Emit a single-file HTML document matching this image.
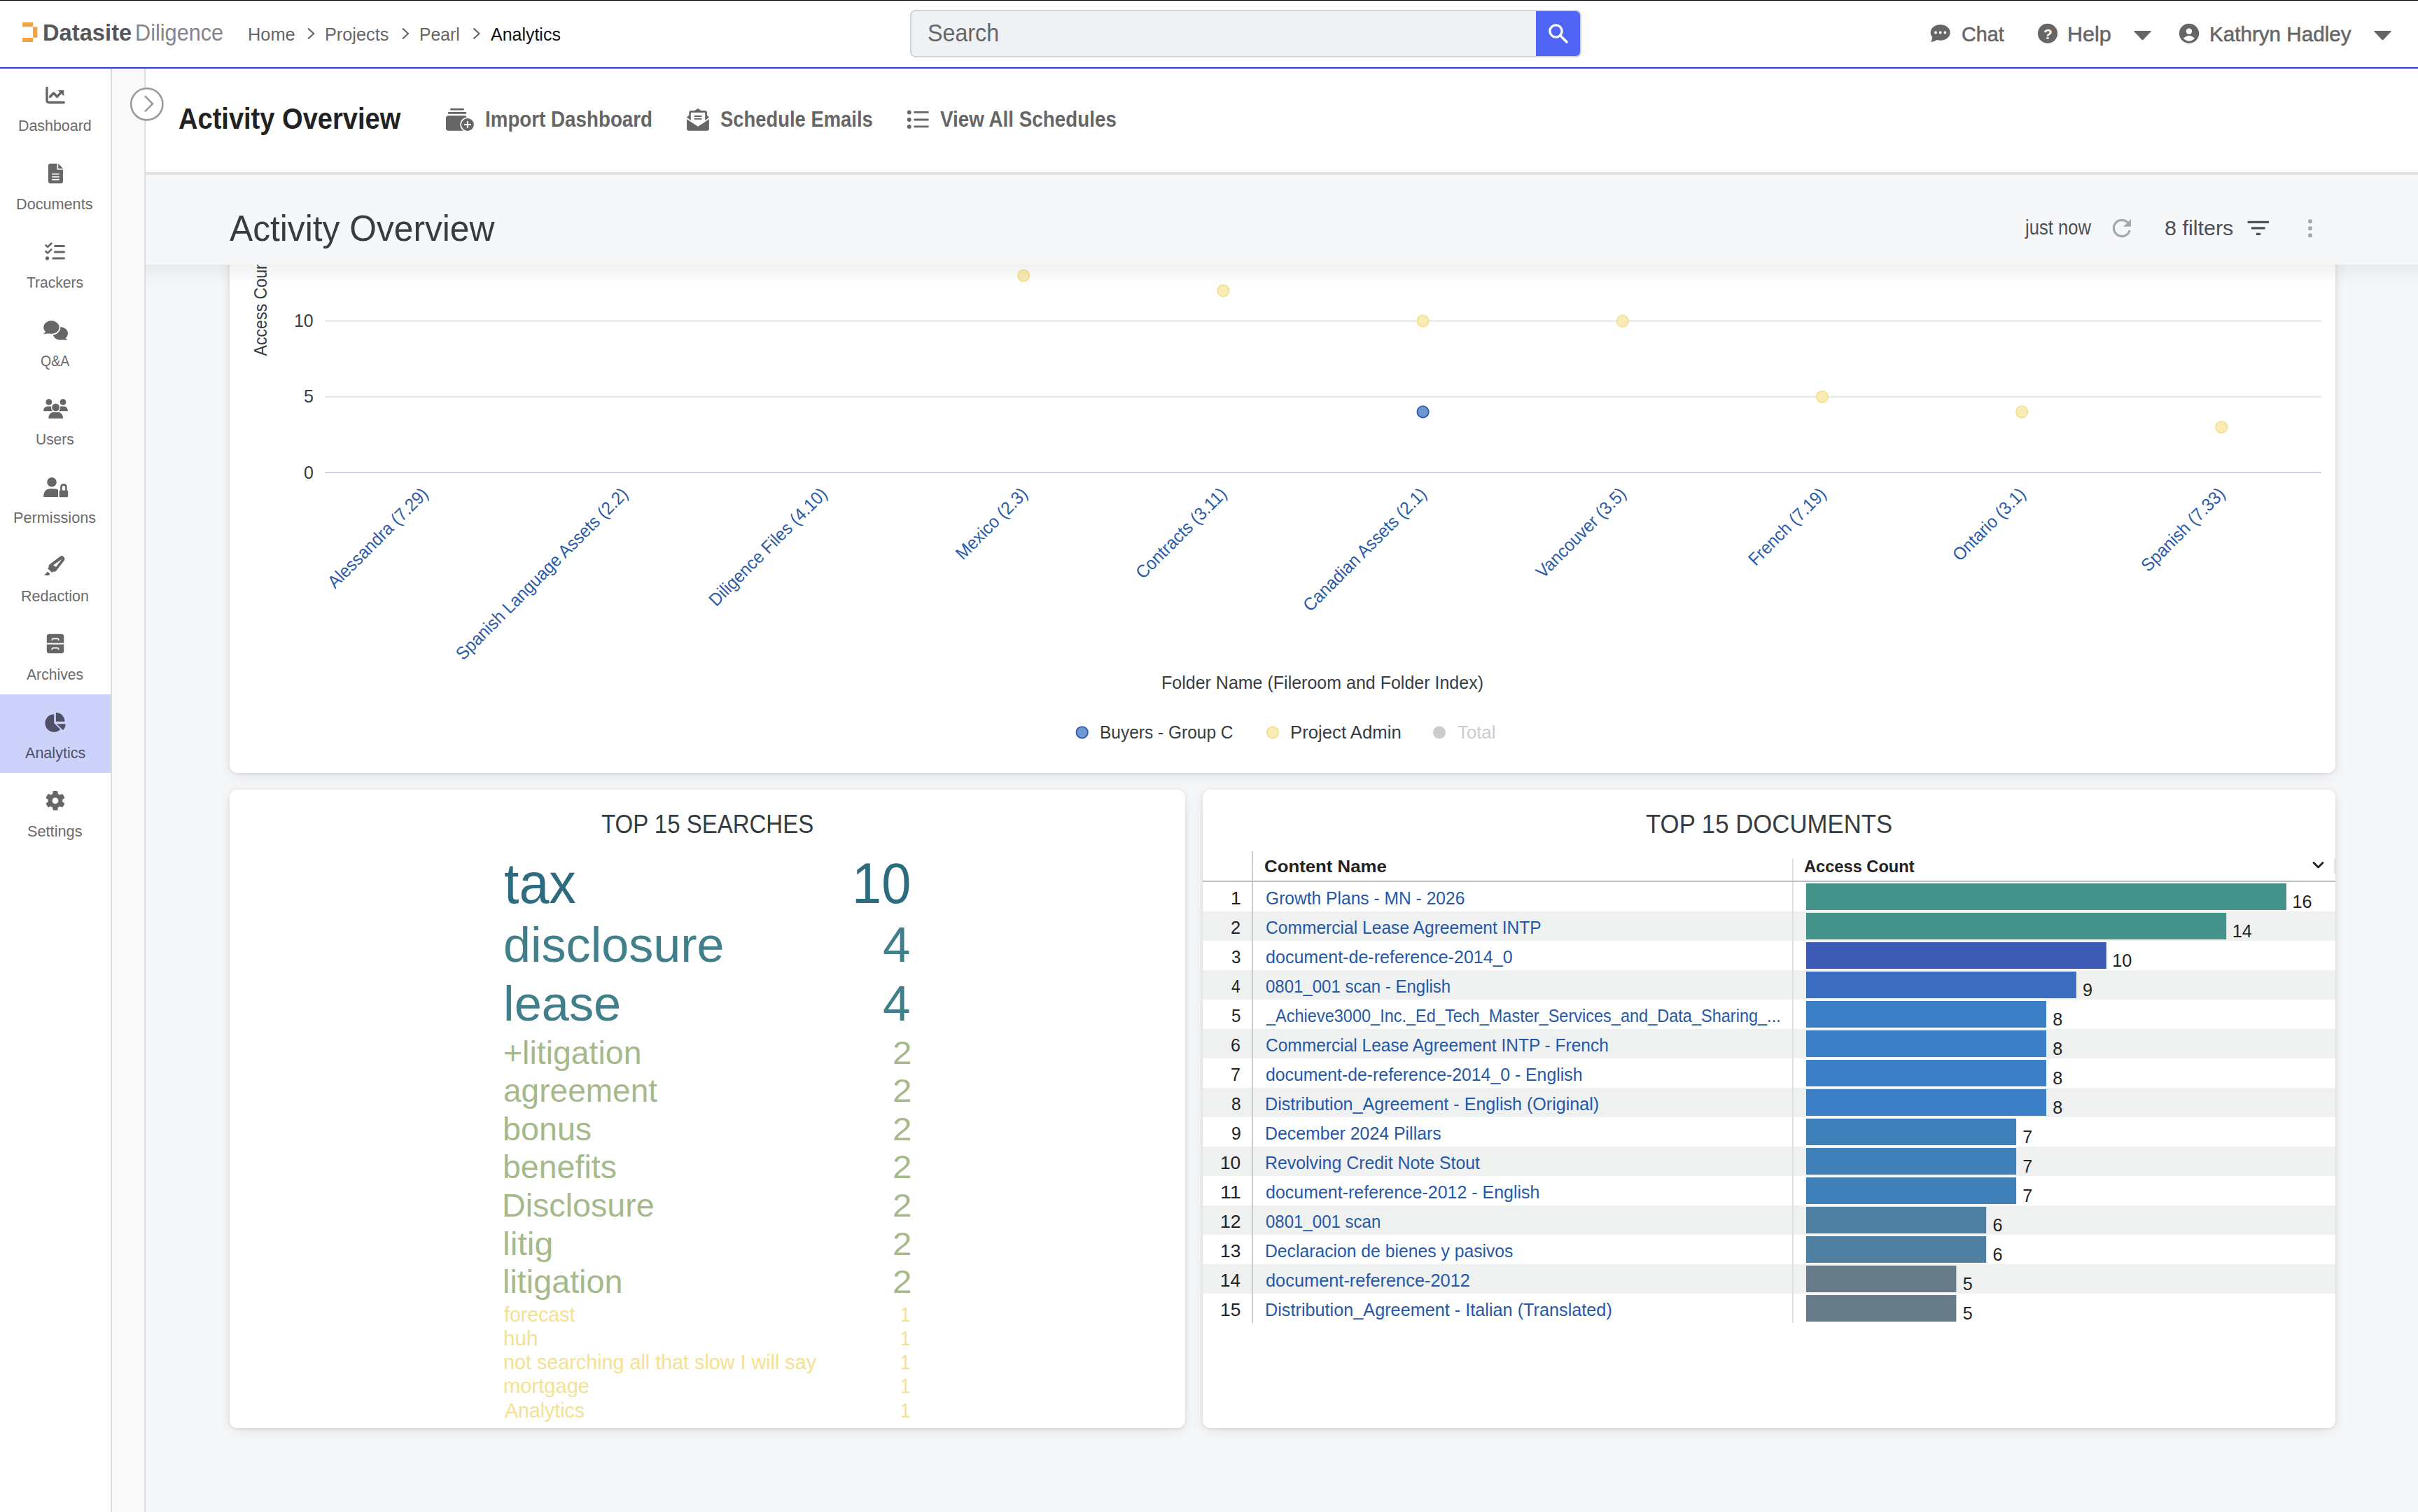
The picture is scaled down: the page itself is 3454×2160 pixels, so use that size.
<!DOCTYPE html>
<html><head><meta charset="utf-8"><style>
html,body{margin:0;padding:0;width:3454px;height:2160px;overflow:hidden;background:#f6f7f9}
body{position:relative;font-family:"Liberation Sans",sans-serif}
.a{position:absolute}
.t{position:absolute;white-space:pre;line-height:1;transform-origin:0 0}
svg.ov{position:absolute;left:0;top:0;overflow:visible}
</style></head><body>
<div class="a" style="left:0px;top:0px;width:3454px;height:2160px;background:#f6f7f9"></div>
<div class="a" style="left:0px;top:98px;width:158px;height:2062px;background:#fff"></div>
<div class="a" style="left:158px;top:98px;width:2px;height:2062px;background:#dcdcdc"></div>
<div class="a" style="left:160px;top:98px;width:46px;height:2062px;background:#f9f9f9"></div>
<div class="a" style="left:206px;top:98px;width:2px;height:2062px;background:#dcdcdc"></div>
<div class="a" style="left:0px;top:992px;width:158px;height:112px;background:#cdd2fa"></div>
<div class="a" style="left:328px;top:250px;width:3008px;height:854px;background:#fff;border-radius:0 0 11px 11px;box-shadow:0 1px 4px rgba(0,0,0,0.09),0 4px 18px rgba(0,0,0,0.09)"></div>
<div class="a" style="left:328px;top:1128px;width:1365px;height:912px;background:#fff;border-radius:11px;box-shadow:0 1px 4px rgba(0,0,0,0.09),0 4px 18px rgba(0,0,0,0.09)"></div>
<div class="a" style="left:1718px;top:1128px;width:1618px;height:912px;background:#fff;border-radius:11px;box-shadow:0 1px 4px rgba(0,0,0,0.09),0 4px 18px rgba(0,0,0,0.09)"></div>
<span class="t" style="left:419.94px;top:446.08px;font-size:25.663082437275953px;font-weight:normal;color:#363d42;transform:scaleX(0.9688);">10</span>
<span class="t" style="left:433.70px;top:554.38px;font-size:25.663082437275953px;font-weight:normal;color:#363d42;transform:scaleX(0.9762);">5</span>
<span class="t" style="left:433.70px;top:662.88px;font-size:25.663082437275953px;font-weight:normal;color:#363d42;transform:scaleX(0.9711);">0</span>
<svg class="ov" width="3454" height="2160" viewBox="0 0 3454 2160"><path d="M464 458.6H3316M464 566.8H3316" stroke="#e6e6e6" stroke-width="2"/><path d="M464 675.0H3316" stroke="#ccd6eb" stroke-width="2"/><circle cx="1462.2" cy="393.7" r="8.2" fill="#f8ecb4" stroke="#f3e08e" stroke-width="1.8"/><circle cx="1747.4" cy="415.3" r="8.2" fill="#f8ecb4" stroke="#f3e08e" stroke-width="1.8"/><circle cx="2032.6" cy="458.6" r="8.2" fill="#f8ecb4" stroke="#f3e08e" stroke-width="1.8"/><circle cx="2317.8" cy="458.6" r="8.2" fill="#f8ecb4" stroke="#f3e08e" stroke-width="1.8"/><circle cx="2603.0" cy="566.8" r="8.2" fill="#f8ecb4" stroke="#f3e08e" stroke-width="1.8"/><circle cx="2888.2" cy="588.4" r="8.2" fill="#f8ecb4" stroke="#f3e08e" stroke-width="1.8"/><circle cx="3173.4" cy="610.1" r="8.2" fill="#f8ecb4" stroke="#f3e08e" stroke-width="1.8"/><circle cx="2032.6" cy="588.4" r="8.2" fill="#7097d0" stroke="#2b5cae" stroke-width="1.8"/></svg>
<span class="t" style="left:413.1px;top:685.5px;font-size:25.4px;color:#2b5ba8;transform-origin:200.5px 21.5px;transform:rotate(-45deg) scaleX(0.95)">Alessandra (7.29)</span>
<span class="t" style="left:545.8px;top:685.5px;font-size:25.4px;color:#2b5ba8;transform-origin:353.0px 21.5px;transform:rotate(-45deg) scaleX(0.95)">Spanish Language Assets (2.2)</span>
<span class="t" style="left:945.4px;top:685.5px;font-size:25.4px;color:#2b5ba8;transform-origin:238.6px 21.5px;transform:rotate(-45deg) scaleX(0.95)">Diligence Files (4.10)</span>
<span class="t" style="left:1329.5px;top:685.5px;font-size:25.4px;color:#2b5ba8;transform-origin:139.7px 21.5px;transform:rotate(-45deg) scaleX(0.95)">Mexico (2.3)</span>
<span class="t" style="left:1574.2px;top:685.5px;font-size:25.4px;color:#2b5ba8;transform-origin:180.2px 21.5px;transform:rotate(-45deg) scaleX(0.95)">Contracts (3.11)</span>
<span class="t" style="left:1789.7px;top:685.5px;font-size:25.4px;color:#2b5ba8;transform-origin:249.9px 21.5px;transform:rotate(-45deg) scaleX(0.95)">Canadian Assets (2.1)</span>
<span class="t" style="left:2146.0px;top:685.5px;font-size:25.4px;color:#2b5ba8;transform-origin:178.8px 21.5px;transform:rotate(-45deg) scaleX(0.95)">Vancouver (3.5)</span>
<span class="t" style="left:2457.5px;top:685.5px;font-size:25.4px;color:#2b5ba8;transform-origin:152.5px 21.5px;transform:rotate(-45deg) scaleX(0.95)">French (7.19)</span>
<span class="t" style="left:2752.6px;top:685.5px;font-size:25.4px;color:#2b5ba8;transform-origin:142.6px 21.5px;transform:rotate(-45deg) scaleX(0.95)">Ontario (3.1)</span>
<span class="t" style="left:3015.2px;top:685.5px;font-size:25.4px;color:#2b5ba8;transform-origin:165.2px 21.5px;transform:rotate(-45deg) scaleX(0.95)">Spanish (7.33)</span>
<span class="t" style="left:380.9px;top:487.4px;font-size:25.4px;color:#363d42;transform-origin:0px 21.5px;transform:rotate(-90deg) scaleX(0.9122)">Access Count</span>
<span class="t" style="left:1659.44px;top:963.18px;font-size:25.3px;font-weight:normal;color:#363d42;transform:scaleX(0.9885);">Folder Name (Fileroom and Folder Index)</span>
<span class="t" style="left:1570.98px;top:1034.44px;font-size:25.0px;font-weight:normal;color:#363d42;transform:scaleX(0.9796);">Buyers - Group C</span>
<span class="t" style="left:1842.88px;top:1034.44px;font-size:25.0px;font-weight:normal;color:#363d42;transform:scaleX(1.0295);">Project Admin</span>
<span class="t" style="left:2081.92px;top:1034.44px;font-size:25.0px;font-weight:normal;color:#cccccc;transform:scaleX(1.0304);">Total</span>
<span class="t" style="left:859.26px;top:1158.70px;font-size:37.8px;font-weight:normal;color:#363d42;transform:scaleX(0.8729);">TOP 15 SEARCHES</span>
<span class="t" style="left:719.84px;top:1221.53px;font-size:81.00358422939068px;font-weight:normal;color:#2d6b80;transform:scaleX(0.9517);">tax</span>
<span class="t" style="left:1217.31px;top:1221.53px;font-size:81.00358422939068px;font-weight:normal;color:#2d6b80;transform:scaleX(0.9369);">10</span>
<span class="t" style="left:718.82px;top:1314.89px;font-size:70.06896551724132px;font-weight:normal;color:#41808a;transform:scaleX(1.0005);">disclosure</span>
<span class="t" style="left:1261.20px;top:1314.89px;font-size:70.06896551724132px;font-weight:normal;color:#41808a;transform:scaleX(1.0146);">4</span>
<span class="t" style="left:718.85px;top:1399.49px;font-size:70.06896551724132px;font-weight:normal;color:#41808a;transform:scaleX(1.0046);">lease</span>
<span class="t" style="left:1261.20px;top:1399.49px;font-size:70.06896551724132px;font-weight:normal;color:#41808a;transform:scaleX(1.0146);">4</span>
<span class="t" style="left:718.69px;top:1480.75px;font-size:46.48275862068972px;font-weight:normal;color:#a6b98b;transform:scaleX(0.9992);">+litigation</span>
<span class="t" style="left:1274.72px;top:1480.75px;font-size:46.48275862068972px;font-weight:normal;color:#a6b98b;transform:scaleX(1.0686);">2</span>
<span class="t" style="left:718.94px;top:1535.32px;font-size:46.48275862068972px;font-weight:normal;color:#a6b98b;transform:scaleX(0.9906);">agreement</span>
<span class="t" style="left:1274.72px;top:1535.32px;font-size:46.48275862068972px;font-weight:normal;color:#a6b98b;transform:scaleX(1.0686);">2</span>
<span class="t" style="left:717.86px;top:1589.89px;font-size:46.48275862068972px;font-weight:normal;color:#a6b98b;transform:scaleX(1.0048);">bonus</span>
<span class="t" style="left:1274.72px;top:1589.89px;font-size:46.48275862068972px;font-weight:normal;color:#a6b98b;transform:scaleX(1.0686);">2</span>
<span class="t" style="left:717.88px;top:1644.46px;font-size:46.48275862068972px;font-weight:normal;color:#a6b98b;transform:scaleX(1.0009);">benefits</span>
<span class="t" style="left:1274.72px;top:1644.46px;font-size:46.48275862068972px;font-weight:normal;color:#a6b98b;transform:scaleX(1.0686);">2</span>
<span class="t" style="left:717.05px;top:1699.03px;font-size:46.48275862068972px;font-weight:normal;color:#a6b98b;transform:scaleX(1.0036);">Disclosure</span>
<span class="t" style="left:1274.72px;top:1699.03px;font-size:46.48275862068972px;font-weight:normal;color:#a6b98b;transform:scaleX(1.0686);">2</span>
<span class="t" style="left:717.64px;top:1753.60px;font-size:46.48275862068972px;font-weight:normal;color:#a6b98b;transform:scaleX(1.0380);">litig</span>
<span class="t" style="left:1274.72px;top:1753.60px;font-size:46.48275862068972px;font-weight:normal;color:#a6b98b;transform:scaleX(1.0686);">2</span>
<span class="t" style="left:717.74px;top:1808.17px;font-size:46.48275862068972px;font-weight:normal;color:#a6b98b;transform:scaleX(1.0059);">litigation</span>
<span class="t" style="left:1274.72px;top:1808.17px;font-size:46.48275862068972px;font-weight:normal;color:#a6b98b;transform:scaleX(1.0686);">2</span>
<span class="t" style="left:720.47px;top:1863.75px;font-size:28.65051903114193px;font-weight:normal;color:#f4e192;transform:scaleX(0.9953);">forecast</span>
<span class="t" style="left:1285.98px;top:1863.75px;font-size:28.65051903114193px;font-weight:normal;color:#f4e192;transform:scaleX(0.8958);">1</span>
<span class="t" style="left:718.82px;top:1897.97px;font-size:28.65051903114193px;font-weight:normal;color:#f4e192;transform:scaleX(1.0369);">huh</span>
<span class="t" style="left:1285.98px;top:1897.97px;font-size:28.65051903114193px;font-weight:normal;color:#f4e192;transform:scaleX(0.8958);">1</span>
<span class="t" style="left:718.96px;top:1932.19px;font-size:28.65051903114193px;font-weight:normal;color:#f4e192;transform:scaleX(1.0030);">not searching all that slow I will say</span>
<span class="t" style="left:1285.98px;top:1932.19px;font-size:28.65051903114193px;font-weight:normal;color:#f4e192;transform:scaleX(0.8958);">1</span>
<span class="t" style="left:718.93px;top:1966.41px;font-size:28.65051903114193px;font-weight:normal;color:#f4e192;transform:scaleX(1.0168);">mortgage</span>
<span class="t" style="left:1285.98px;top:1966.41px;font-size:28.65051903114193px;font-weight:normal;color:#f4e192;transform:scaleX(0.8958);">1</span>
<span class="t" style="left:720.83px;top:2000.63px;font-size:28.65051903114193px;font-weight:normal;color:#f4e192;transform:scaleX(0.9956);">Analytics</span>
<span class="t" style="left:1285.98px;top:2000.63px;font-size:28.65051903114193px;font-weight:normal;color:#f4e192;transform:scaleX(0.8958);">1</span>
<span class="t" style="left:2350.72px;top:1158.60px;font-size:37.8px;font-weight:normal;color:#363d42;transform:scaleX(0.9197);">TOP 15 DOCUMENTS</span>
<div class="a" style="left:1718px;top:1302px;width:1618px;height:42px;background:#eff1f1"></div>
<div class="a" style="left:1718px;top:1386px;width:1618px;height:42px;background:#eff1f1"></div>
<div class="a" style="left:1718px;top:1470px;width:1618px;height:42px;background:#eff1f1"></div>
<div class="a" style="left:1718px;top:1554px;width:1618px;height:42px;background:#eff1f1"></div>
<div class="a" style="left:1718px;top:1638px;width:1618px;height:42px;background:#eff1f1"></div>
<div class="a" style="left:1718px;top:1722px;width:1618px;height:42px;background:#eff1f1"></div>
<div class="a" style="left:1718px;top:1806px;width:1618px;height:42px;background:#eff1f1"></div>
<div class="a" style="left:1788px;top:1216px;width:2px;height:674px;background:#c9cdd1"></div>
<div class="a" style="left:2560px;top:1227px;width:2px;height:663px;background:#dfe2e5"></div>
<div class="a" style="left:1718px;top:1258px;width:1618px;height:2px;background:#b9bec3"></div>
<span class="t" style="left:1805.77px;top:1225.81px;font-size:24.8px;font-weight:bold;color:#222;transform:scaleX(1.0404);">Content Name</span>
<span class="t" style="left:2577.41px;top:1225.81px;font-size:24.8px;font-weight:bold;color:#222;transform:scaleX(0.9530);">Access Count</span>
<div class="a" style="left:3334px;top:1227px;width:2px;height:21px;background:#dfe2e5"></div>
<span class="t" style="left:1757.71px;top:1271.15px;font-size:25.806451612903224px;font-weight:normal;color:#222;transform:scaleX(1.0303);">1</span>
<span class="t" style="left:1807.57px;top:1271.15px;font-size:25.806451612903224px;font-weight:normal;color:#2558a8;transform:scaleX(0.9536);">Growth Plans - MN - 2026</span>
<span class="t" style="left:3274.51px;top:1275.87px;font-size:25.2px;font-weight:normal;color:#222;">16</span>
<span class="t" style="left:1758.44px;top:1313.15px;font-size:25.806451612903224px;font-weight:normal;color:#222;transform:scaleX(0.9794);">2</span>
<span class="t" style="left:1807.57px;top:1313.15px;font-size:25.806451612903224px;font-weight:normal;color:#2558a8;transform:scaleX(0.9536);">Commercial Lease Agreement INTP</span>
<span class="t" style="left:3188.76px;top:1317.87px;font-size:25.2px;font-weight:normal;color:#222;">14</span>
<span class="t" style="left:1758.79px;top:1355.15px;font-size:25.806451612903224px;font-weight:normal;color:#222;transform:scaleX(0.9382);">3</span>
<span class="t" style="left:1807.73px;top:1355.15px;font-size:25.806451612903224px;font-weight:normal;color:#2558a8;transform:scaleX(0.9719);">document-de-reference-2014_0</span>
<span class="t" style="left:3017.26px;top:1359.87px;font-size:25.2px;font-weight:normal;color:#222;">10</span>
<span class="t" style="left:1759.19px;top:1397.15px;font-size:25.806451612903224px;font-weight:normal;color:#222;transform:scaleX(0.8824);">4</span>
<span class="t" style="left:1807.84px;top:1397.15px;font-size:25.806451612903224px;font-weight:normal;color:#2558a8;transform:scaleX(0.9303);">0801_001 scan - English</span>
<span class="t" style="left:2975.08px;top:1401.87px;font-size:25.2px;font-weight:normal;color:#222;">9</span>
<span class="t" style="left:1758.73px;top:1439.15px;font-size:25.806451612903224px;font-weight:normal;color:#222;transform:scaleX(0.9382);">5</span>
<span class="t" style="left:1809.15px;top:1439.15px;font-size:25.806451612903224px;font-weight:normal;color:#2558a8;transform:scaleX(0.9116);">_Achieve3000_Inc._Ed_Tech_Master_Services_and_Data_Sharing_...</span>
<span class="t" style="left:2932.33px;top:1443.87px;font-size:25.2px;font-weight:normal;color:#222;">8</span>
<span class="t" style="left:1758.46px;top:1481.15px;font-size:25.806451612903224px;font-weight:normal;color:#222;transform:scaleX(0.9635);">6</span>
<span class="t" style="left:1807.57px;top:1481.15px;font-size:25.806451612903224px;font-weight:normal;color:#2558a8;transform:scaleX(0.9499);">Commercial Lease Agreement INTP - French</span>
<span class="t" style="left:2932.33px;top:1485.87px;font-size:25.2px;font-weight:normal;color:#222;">8</span>
<span class="t" style="left:1758.44px;top:1523.15px;font-size:25.806451612903224px;font-weight:normal;color:#222;transform:scaleX(0.9794);">7</span>
<span class="t" style="left:1807.74px;top:1523.15px;font-size:25.806451612903224px;font-weight:normal;color:#2558a8;transform:scaleX(0.9619);">document-de-reference-2014_0 - English</span>
<span class="t" style="left:2932.33px;top:1527.87px;font-size:25.2px;font-weight:normal;color:#222;">8</span>
<span class="t" style="left:1758.66px;top:1565.15px;font-size:25.806451612903224px;font-weight:normal;color:#222;transform:scaleX(0.9481);">8</span>
<span class="t" style="left:1806.73px;top:1565.15px;font-size:25.806451612903224px;font-weight:normal;color:#2558a8;transform:scaleX(0.9732);">Distribution_Agreement - English (Original)</span>
<span class="t" style="left:2932.33px;top:1569.87px;font-size:25.2px;font-weight:normal;color:#222;">8</span>
<span class="t" style="left:1758.52px;top:1607.15px;font-size:25.806451612903224px;font-weight:normal;color:#222;transform:scaleX(0.9635);">9</span>
<span class="t" style="left:1806.75px;top:1607.15px;font-size:25.806451612903224px;font-weight:normal;color:#2558a8;transform:scaleX(0.9647);">December 2024 Pillars</span>
<span class="t" style="left:2889.26px;top:1611.87px;font-size:25.2px;font-weight:normal;color:#222;">7</span>
<span class="t" style="left:1743.03px;top:1649.15px;font-size:25.806451612903224px;font-weight:normal;color:#222;transform:scaleX(1.0178);">10</span>
<span class="t" style="left:1806.75px;top:1649.15px;font-size:25.806451612903224px;font-weight:normal;color:#2558a8;transform:scaleX(0.9645);">Revolving Credit Note Stout</span>
<span class="t" style="left:2889.26px;top:1653.87px;font-size:25.2px;font-weight:normal;color:#222;">7</span>
<span class="t" style="left:1742.85px;top:1691.15px;font-size:25.806451612903224px;font-weight:normal;color:#222;transform:scaleX(1.1096);">11</span>
<span class="t" style="left:1807.74px;top:1691.15px;font-size:25.806451612903224px;font-weight:normal;color:#2558a8;transform:scaleX(0.9681);">document-reference-2012 - English</span>
<span class="t" style="left:2889.26px;top:1695.87px;font-size:25.2px;font-weight:normal;color:#222;">7</span>
<span class="t" style="left:1743.01px;top:1733.15px;font-size:25.806451612903224px;font-weight:normal;color:#222;transform:scaleX(1.0307);">12</span>
<span class="t" style="left:1807.84px;top:1733.15px;font-size:25.806451612903224px;font-weight:normal;color:#2558a8;transform:scaleX(0.9309);">0801_001 scan</span>
<span class="t" style="left:2846.39px;top:1737.87px;font-size:25.2px;font-weight:normal;color:#222;">6</span>
<span class="t" style="left:1743.02px;top:1775.15px;font-size:25.806451612903224px;font-weight:normal;color:#222;transform:scaleX(1.0229);">13</span>
<span class="t" style="left:1806.76px;top:1775.15px;font-size:25.806451612903224px;font-weight:normal;color:#2558a8;transform:scaleX(0.9581);">Declaracion de bienes y pasivos</span>
<span class="t" style="left:2846.39px;top:1779.87px;font-size:25.2px;font-weight:normal;color:#222;">6</span>
<span class="t" style="left:1743.05px;top:1817.15px;font-size:25.806451612903224px;font-weight:normal;color:#222;transform:scaleX(1.0077);">14</span>
<span class="t" style="left:1807.72px;top:1817.15px;font-size:25.806451612903224px;font-weight:normal;color:#2558a8;transform:scaleX(0.9833);">document-reference-2012</span>
<span class="t" style="left:2803.77px;top:1821.87px;font-size:25.2px;font-weight:normal;color:#222;">5</span>
<span class="t" style="left:1743.03px;top:1859.15px;font-size:25.806451612903224px;font-weight:normal;color:#222;transform:scaleX(1.0204);">15</span>
<span class="t" style="left:1806.72px;top:1859.15px;font-size:25.806451612903224px;font-weight:normal;color:#2558a8;transform:scaleX(0.9787);">Distribution_Agreement - Italian (Translated)</span>
<span class="t" style="left:2803.77px;top:1863.87px;font-size:25.2px;font-weight:normal;color:#222;">5</span>
<svg class="ov" width="3454" height="2160" viewBox="0 0 3454 2160"><circle cx="1545.7" cy="1046.3" r="8.2" fill="#7097d0" stroke="#2b5cae" stroke-width="1.8"/><circle cx="1817.9" cy="1046.3" r="8.2" fill="#f8ecb4" stroke="#f3e08e" stroke-width="1.8"/><circle cx="2055.9" cy="1046.3" r="9" fill="#cccccc"/><path d="M3305 1232.5L3311.5 1239L3318 1232.5" fill="none" stroke="#222" stroke-width="2.8" stroke-linecap="round" stroke-linejoin="round"/><rect x="2580" y="1262" width="686.0" height="38" fill="#43938a"/><rect x="2580" y="1304" width="600.2" height="38" fill="#43938a"/><rect x="2580" y="1346" width="428.8" height="38" fill="#3d5ab5"/><rect x="2580" y="1388" width="385.9" height="38" fill="#3a6cc0"/><rect x="2580" y="1430" width="343.0" height="38" fill="#3b80c6"/><rect x="2580" y="1472" width="343.0" height="38" fill="#3b80c6"/><rect x="2580" y="1514" width="343.0" height="38" fill="#3b80c6"/><rect x="2580" y="1556" width="343.0" height="38" fill="#3b80c6"/><rect x="2580" y="1598" width="300.1" height="38" fill="#3f80b8"/><rect x="2580" y="1640" width="300.1" height="38" fill="#3f80b8"/><rect x="2580" y="1682" width="300.1" height="38" fill="#3f80b8"/><rect x="2580" y="1724" width="257.2" height="38" fill="#4e7fa1"/><rect x="2580" y="1766" width="257.2" height="38" fill="#4e7fa1"/><rect x="2580" y="1808" width="214.4" height="38" fill="#687b88"/><rect x="2580" y="1850" width="214.4" height="38" fill="#687b88"/></svg>
<span class="t" style="left:26.23px;top:170.48px;font-size:21.4px;font-weight:normal;color:#6b6b6b;transform:scaleX(1.0006);">Dashboard</span>
<span class="t" style="left:23.21px;top:282.48px;font-size:21.4px;font-weight:normal;color:#6b6b6b;transform:scaleX(1.0121);">Documents</span>
<span class="t" style="left:38.03px;top:394.48px;font-size:21.4px;font-weight:normal;color:#6b6b6b;transform:scaleX(0.9838);">Trackers</span>
<span class="t" style="left:57.57px;top:506.48px;font-size:21.4px;font-weight:normal;color:#6b6b6b;transform:scaleX(0.9131);">Q&amp;A</span>
<span class="t" style="left:50.78px;top:618.48px;font-size:21.4px;font-weight:normal;color:#6b6b6b;transform:scaleX(0.9794);">Users</span>
<span class="t" style="left:19.21px;top:730.48px;font-size:21.4px;font-weight:normal;color:#6b6b6b;transform:scaleX(1.0140);">Permissions</span>
<span class="t" style="left:30.12px;top:842.48px;font-size:21.4px;font-weight:normal;color:#6b6b6b;transform:scaleX(1.0059);">Redaction</span>
<span class="t" style="left:38.35px;top:954.48px;font-size:21.4px;font-weight:normal;color:#6b6b6b;transform:scaleX(0.9881);">Archives</span>
<span class="t" style="left:35.75px;top:1066.48px;font-size:21.4px;font-weight:normal;color:#4f5068;transform:scaleX(1.0076);">Analytics</span>
<span class="t" style="left:39.22px;top:1178.48px;font-size:21.4px;font-weight:normal;color:#6b6b6b;transform:scaleX(1.0159);">Settings</span>
<svg class="ov" width="3454" height="2160" viewBox="0 0 3454 2160"><path d="M67 125.5V143.5Q67 146.2 69.7 146.2H91.2" fill="none" stroke="#666" stroke-width="3.4" stroke-linecap="round"/><path d="M71.5 138.3L76.6 133L81.6 138.2L87.2 132.2" fill="none" stroke="#666" stroke-width="3.4" stroke-linecap="round" stroke-linejoin="round"/><path d="M83.6 129.3H90.8V136.5Z" fill="#666" stroke="#666" stroke-width="1" stroke-linejoin="round"/><path d="M72 233.8H81.5V242.5H90V259Q90 262 87 262H72Q69 262 69 259V236.8Q69 233.8 72 233.8Z" fill="#666"/><path d="M83.2 233.8L90 240.7H83.2Z" fill="#666"/><path d="M74.2 248.6h10.5M74.2 252.6h10.5M74.2 256.7h10.5" stroke="#fff" stroke-width="1.8"/><path d="M65.5 350.5l2.6 2.4l5.3-5.2M65.5 359.2l2.6 2.4l5.3-5.2" fill="none" stroke="#666" stroke-width="2.6" stroke-linecap="round" stroke-linejoin="round"/><circle cx="67.5" cy="368.9" r="2.6" fill="#666"/><path d="M78.5 351.4h13M78.5 360.1h13M75.8 368.9h15.7" stroke="#666" stroke-width="3" stroke-linecap="round"/><ellipse cx="86.2" cy="476.3" rx="10.8" ry="9.4" fill="#666"/><path d="M92.5 482.5 L96.8 486 L86.5 485Z" fill="#666"/><ellipse cx="73.4" cy="467.6" rx="13" ry="11.3" fill="#fff"/><ellipse cx="73.4" cy="467.6" rx="11.2" ry="9.5" fill="#666"/><path d="M65.8 473.5 L62 477.3 L70.5 476.3Z" fill="#666"/><circle cx="69.8" cy="574.4" r="4.4" fill="#666"/><circle cx="90" cy="574.4" r="4.4" fill="#666"/><path d="M62 587.2Q62 580.5 68.5 580.5H72Q76 580.5 77 583V587.2Z" fill="#666"/><path d="M97 587.2Q97 580.5 90.5 580.5H87Q83 580.5 82 583V587.2Z" fill="#666"/><circle cx="79.6" cy="582" r="6.6" fill="#fff"/><circle cx="79.6" cy="582" r="5.4" fill="#666"/><path d="M67.8 598.5Q67.8 587.5 77.5 587.5H81.7Q91.4 587.5 91.4 598.5Z" fill="#fff"/><path d="M69.3 597.8Q69.3 588.8 77.8 588.8H81.5Q90 588.8 90 597.8Z" fill="#666"/><circle cx="74" cy="688.8" r="6.8" fill="#666"/><path d="M62.2 710Q62.2 698.2 72 698.2H76Q80.5 698.2 83 699.5V710Z" fill="#666"/><rect x="84.6" y="700.4" width="12.6" height="9.8" rx="1.6" fill="#666"/><path d="M87.4 701V696.3Q87.4 692.4 90.9 692.4Q94.4 692.4 94.4 696.3V701" fill="none" stroke="#666" stroke-width="2.6"/><path d="M70.5 806.6L86.5 794.5Q88.5 793.3 90.3 795L91.8 796.6Q93.2 798.4 92 800.2L80.5 815.2Q78.5 817.6 75.8 816.2L74.5 818.2L68 812L69.8 810.2Q68.6 808.3 70.5 806.6Z" fill="#666"/><path d="M76 807.3L88.5 798.8L80 810Z" fill="#fff"/><path d="M63.2 821.6L68.2 816.6L71.6 820L69 822.3Z" fill="#666"/><rect x="66.8" y="905.8" width="24.4" height="27.4" rx="3.5" fill="#666"/><path d="M66.8 919.6h24.4" stroke="#fff" stroke-width="2"/><path d="M74.3 914.5Q74.3 912.4 76.3 912.4H81.8Q83.8 912.4 83.8 914.5M74.3 927.7Q74.3 925.6 76.3 925.6H81.8Q83.8 925.6 83.8 927.7" fill="none" stroke="#fff" stroke-width="1.6" stroke-linecap="round"/><path d="M77.2 1033V1020.2A12.8 12.8 0 1 0 86.25 1042.05Z" fill="#4f5068"/><path d="M79.9 1030.7V1018.1A12.6 12.6 0 0 1 92.5 1030.7Z" fill="#4f5068"/><path d="M81 1034.2H93.6A12.6 12.6 0 0 1 89.9 1043.1Z" fill="#4f5068"/><path d="M76.52 1131.04L81.48 1131.04L81.81 1134.62L85.55 1136.78L88.81 1135.27L91.29 1139.57L88.35 1141.64L88.35 1145.96L91.29 1148.03L88.81 1152.33L85.55 1150.82L81.81 1152.98L81.48 1156.56L76.52 1156.56L76.19 1152.98L72.45 1150.82L69.19 1152.33L66.71 1148.03L69.65 1145.96L69.65 1141.64L66.71 1139.57L69.19 1135.27L72.45 1136.78L76.19 1134.62Z" fill="#666" stroke="#666" stroke-width="2" stroke-linejoin="round"/><circle cx="79" cy="1143.8" r="4.4" fill="#fff"/></svg>
<div class="a" style="left:0px;top:0px;width:3454px;height:96px;background:#fff"></div>
<div class="a" style="left:0px;top:0px;width:3454px;height:1px;background:#000"></div>
<div class="a" style="left:0px;top:96px;width:3454px;height:2px;background:#2c3de8"></div>
<span class="t" style="left:60.79px;top:30.60px;font-size:32.6px;font-weight:bold;color:#57565b;transform:scaleX(1.0036);">Datasite</span>
<span class="t" style="left:193.47px;top:30.60px;font-size:32.6px;font-weight:normal;color:#858489;transform:scaleX(0.9416);">Diligence</span>
<span class="t" style="left:353.81px;top:37.02px;font-size:24.9px;font-weight:normal;color:#666;transform:scaleX(1.0188);">Home</span>
<span class="t" style="left:463.91px;top:37.02px;font-size:24.9px;font-weight:normal;color:#666;transform:scaleX(1.0158);">Projects</span>
<span class="t" style="left:598.96px;top:37.02px;font-size:24.9px;font-weight:normal;color:#666;transform:scaleX(0.9925);">Pearl</span>
<span class="t" style="left:700.94px;top:37.02px;font-size:24.9px;font-weight:normal;color:#111;transform:scaleX(1.0027);">Analytics</span>
<div class="a" style="left:1300px;top:14px;width:959px;height:68px;box-sizing:border-box;background:#eff2f5;border:2px solid #cfd3d7;border-radius:8px"></div>
<div class="a" style="left:2194px;top:16px;width:63px;height:64px;background:#5065f6;border-radius:0 6px 6px 0"></div>
<span class="t" style="left:1324.55px;top:30.21px;font-size:35.9px;font-weight:normal;color:#666;transform:scaleX(0.8976);">Search</span>
<span class="t" style="left:2801.56px;top:33.93px;font-size:29.5px;font-weight:normal;color:#666;transform:scaleX(0.9732);-webkit-text-stroke:0.55px #666;">Chat</span>
<span class="t" style="left:2953.48px;top:33.93px;font-size:29.5px;font-weight:normal;color:#666;transform:scaleX(1.0349);-webkit-text-stroke:0.55px #666;">Help</span>
<span class="t" style="left:3155.56px;top:33.93px;font-size:29.5px;font-weight:normal;color:#666;transform:scaleX(1.0040);-webkit-text-stroke:0.55px #666;">Kathryn Hadley</span>
<svg class="ov" width="3454" height="2160" viewBox="0 0 3454 2160"><path d="M32 32h15v6.3H32zM47.1 38.5h6.3v15.2h-6.3zM32 53.9h15V60H32z" fill="#f0a445"/><path d="M440 40.5L448 48L440 55.5" fill="none" stroke="#666" stroke-width="2.2"/><path d="M575 40.5L583 48L575 55.5" fill="none" stroke="#666" stroke-width="2.2"/><path d="M676.5 40.5L684.5 48L676.5 55.5" fill="none" stroke="#666" stroke-width="2.2"/><circle cx="2222.5" cy="44.5" r="8.6" fill="none" stroke="#fff" stroke-width="3.4"/><path d="M2229 51l9 9" stroke="#fff" stroke-width="3.6" stroke-linecap="round"/><ellipse cx="2771.7" cy="46.5" rx="14" ry="11.2" fill="#666"/><path d="M2760 53 Q2760 58 2757.7 60 Q2764 59.5 2768 56 Z" fill="#666"/><circle cx="2765" cy="46.5" r="1.9" fill="#fff"/><circle cx="2771.7" cy="46.5" r="1.9" fill="#fff"/><circle cx="2778.4" cy="46.5" r="1.9" fill="#fff"/><circle cx="2925" cy="47.8" r="14.1" fill="#666"/><path d="M3048.5 44h23.5q1.5 0 .5 1.3l-11 11.5q-1 1-2 0l-11 -11.5q-1 -1.3 .5 -1.3z" fill="#666"/><circle cx="3127" cy="47.8" r="14.1" fill="#666"/><circle cx="3127" cy="44.8" r="4.2" fill="#fff"/><path d="M3118.7 55 Q3127 47 3135.1 55 Q3127 62.4 3118.7 55Z" fill="#fff"/><path d="M3391.5 44h23.5q1.5 0 .5 1.3l-11 11.5q-1 1-2 0l-11 -11.5q-1 -1.3 .5 -1.3z" fill="#666"/></svg>
<span class="t" style="left:2919.06px;top:38.68px;font-size:20.22px;font-weight:bold;color:#fff;transform:scaleX(1.0330);">?</span>
<div class="a" style="left:208px;top:98px;width:3246px;height:148px;background:#fff"></div>
<div class="a" style="left:208px;top:246px;width:3246px;height:4px;background:#e1e1e1"></div>
<span class="t" style="left:255.05px;top:148.68px;font-size:42.2px;font-weight:bold;color:#222;transform:scaleX(0.9020);">Activity Overview</span>
<span class="t" style="left:693.13px;top:156.03px;font-size:30.8px;font-weight:bold;color:#666;transform:scaleX(0.9013);">Import Dashboard</span>
<span class="t" style="left:1028.58px;top:156.03px;font-size:30.8px;font-weight:bold;color:#666;transform:scaleX(0.8898);">Schedule Emails</span>
<span class="t" style="left:1343.09px;top:156.03px;font-size:30.8px;font-weight:bold;color:#666;transform:scaleX(0.9027);">View All Schedules</span>
<svg class="ov" width="3454" height="2160" viewBox="0 0 3454 2160"><circle cx="209.8" cy="148.8" r="22.6" fill="#fff" stroke="#9a9a9a" stroke-width="2.6"/><path d="M207 137.2L218 148.3L207 159.4" fill="none" stroke="#9a9a9a" stroke-width="2.6"/><path d="M644.5 156.2h17" stroke="#666" stroke-width="2.8" stroke-linecap="round"/><path d="M641.2 161.4h23.6" stroke="#666" stroke-width="2.8" stroke-linecap="round"/><rect x="637" y="165.2" width="30" height="21.6" rx="3.5" fill="#666"/><circle cx="667.9" cy="178" r="10.6" fill="#fff"/><circle cx="667.9" cy="178" r="9" fill="#666"/><path d="M667.9 173.2v9.6M663.1 178h9.6" stroke="#fff" stroke-width="2"/><path d="M981 167.8L984.2 164.6V161Q984.2 158 987.2 158H992.2L997 155L1001.7 158H1006.9Q1009.9 158 1009.9 161V164.6L1012.9 167.8L997 179.6Z" fill="#666"/><rect x="986.8" y="160.8" width="20.4" height="24" fill="#fff"/><path d="M991.6 166h10.8M991.6 169.9h10.8" stroke="#666" stroke-width="1.8"/><path d="M981 170.3L997 180.8L1012.9 170.3V183.7Q1012.9 186.7 1009.9 186.7H984Q981 186.7 981 183.7Z" fill="#666" stroke="#fff" stroke-width="2.6" paint-order="stroke"/><circle cx="1298.8" cy="160.4" r="2.9" fill="#666"/><circle cx="1298.8" cy="171" r="2.9" fill="#666"/><circle cx="1298.8" cy="180.9" r="2.9" fill="#666"/><path d="M1306.5 160.4h19M1306.5 171h19M1306.5 180.9h19" stroke="#666" stroke-width="2.8" stroke-linecap="round"/></svg>
<div class="a" style="left:208px;top:378px;width:3246px;height:34px;background:linear-gradient(rgba(30,35,40,0.06),rgba(30,35,40,0.015) 60%,rgba(30,35,40,0))"></div>
<div class="a" style="left:208px;top:250px;width:3246px;height:128px;background:#f6f7f9"></div>
<span class="t" style="left:328.08px;top:301.39px;font-size:51.4px;font-weight:normal;color:#363d42;transform:scaleX(0.9673);">Activity Overview</span>
<span class="t" style="left:2892.64px;top:311.42px;font-size:28.8px;font-weight:normal;color:#4a5055;transform:scaleX(0.8884);">just now</span>
<span class="t" style="left:3092.20px;top:312.22px;font-size:28.8px;font-weight:normal;color:#4a5055;transform:scaleX(1.0599);">8 filters</span>
<svg class="ov" width="3454" height="2160" viewBox="0 0 3454 2160"><path d="M3039.9 318.5A11.6 11.6 0 1 0 3042.2 329" fill="none" stroke="#a5a9ac" stroke-width="3.2"/><path d="M3033.1 323.8L3044 313V323.8Z" fill="#a5a9ac"/><path d="M3210.6 317.3h30.4M3216 325.9h19.6M3222.9 334.4h6.1" stroke="#4a5055" stroke-width="3.2"/><circle cx="3300" cy="316.3" r="3" fill="#a3a7aa"/><circle cx="3300" cy="326.2" r="3" fill="#a3a7aa"/><circle cx="3300" cy="336.2" r="3" fill="#a3a7aa"/></svg>
</body></html>
